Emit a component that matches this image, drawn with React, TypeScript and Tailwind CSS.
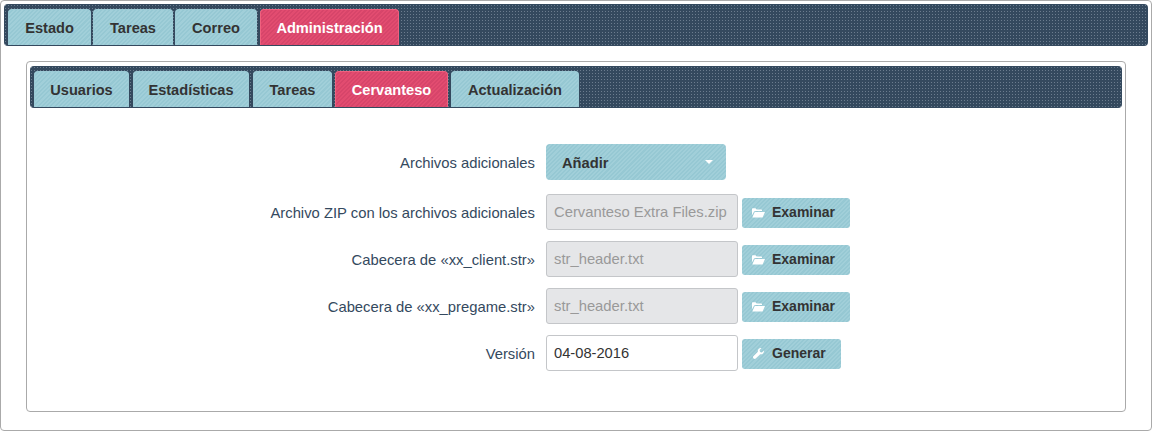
const barBg =
  "bg-[#34495e] bg-[radial-gradient(circle_at_1.5px_1.5px,#6b7c8e_0.8px,transparent_1px)] bg-[length:3px_3px]";
const tealBg =
  "bg-[#9ccbd6] bg-[repeating-linear-gradient(135deg,#a1cfd9_0px,#a1cfd9_1.5px,#96c8d3_1.5px,#96c8d3_3px)]";
const redBg =
  "bg-[#dd4468] bg-[repeating-linear-gradient(135deg,#e24c70_0px,#e24c70_1.5px,#d7456a_1.5px,#d7456a_3px)]";

function TabBar({ tabs, active, className }: { tabs: { label: string; width: string }[]; active: string; className: string }) {
  return (
    <div className={`flex h-[42px] items-end rounded-[4px] pb-[1px] pl-1 ${barBg} ${className}`}>
      {tabs.map((tab) => (
        <div
          key={tab.label}
          className={`flex h-[36px] items-center justify-center rounded-t-[4px] border border-b-0 pt-[2px] text-[14.6px] font-bold ${tab.width} ${
            tab.label === active
              ? `border-[#f0617f] text-white ${redBg}`
              : `border-[#9ccbd6] text-[#333333] ${tealBg}`
          }`}
        >
          {tab.label}
        </div>
      ))}
    </div>
  );
}

function FolderIcon() {
  return (
    <svg width="13" height="10" viewBox="0 0 13 10" fill="#fff" className="shrink-0">
      <path d="M0 1.2C0 .6.4.2 1 .2h2.6l1 1.2h4.6c.5 0 .8.3.8.8v.8H3.2c-.6 0-1 .3-1.3.8L0 7.2z" />
      <path d="M3.2 3.9H13L10.8 9c-.2.4-.5.6-1 .6H.8c-.3 0-.5-.2-.3-.5l2-4.6c.1-.4.4-.6.7-.6z" />
    </svg>
  );
}

function WrenchIcon() {
  return (
    <svg width="11" height="11" viewBox="0 0 12 12" fill="#fff" className="mx-[1px] shrink-0">
      <path d="M11.8 2.7c.3 1.2 0 2.4-.9 3.2-.8.8-1.9 1.1-3 .8L3 11.5c-.6.6-1.6.6-2.2 0l-.4-.4c-.6-.6-.6-1.5 0-2.1l4.9-4.8c-.3-1.1 0-2.3.8-3.1C7 .2 8.2-.1 9.3.2L7.2 2.3l.5 2 2 .5z" />
    </svg>
  );
}

function ActionButton({ label, width, icon }: { label: string; width: string; icon: React.ReactNode }) {
  return (
    <button className={`mt-[1px] flex h-[30px] items-center gap-[7px] rounded-[3px] pl-[10px] text-[14px] font-bold text-[#333333] ${width} ${tealBg}`}>
      {icon}
      <span>{label}</span>
    </button>
  );
}

function Row({ label, className, children }: { label: string; className?: string; children: React.ReactNode }) {
  return (
    <div className={`flex h-[36px] items-center ${className ?? ""}`}>
      <label className="w-[535px] pt-[2px] text-right text-[14.8px] text-[#34495e]">{label}</label>
      <div className="ml-[11px] flex items-center gap-[4px]">{children}</div>
    </div>
  );
}

function FileRow({ label, file, className }: { label: string; file: string; className?: string }) {
  return (
    <Row label={label} className={className}>
      <div className="flex h-[36px] w-[192px] items-center rounded-[3px] border border-[#c4c6c9] bg-[#e5e6e8] pl-[7px] text-[14.8px] text-[#999999]">
        {file}
      </div>
      <ActionButton label="Examinar" width="w-[108px]" icon={<FolderIcon />} />
    </Row>
  );
}

export default function App() {
  return (
    <div className="h-[431px] w-[1152px] overflow-hidden rounded-[4px] border border-[#aaaaaa] bg-white px-[3px] pt-[3px] font-['Liberation_Sans',Arial,sans-serif]">
      <TabBar
        className="gap-[2px]"
        active="Administración"
        tabs={[
          { label: "Estado", width: "w-[83px]" },
          { label: "Tareas", width: "w-[80px]" },
          { label: "Correo", width: "w-[82px]" },
          { label: "Administración", width: "ml-[1px] w-[139px]" },
        ]}
      />
      <div className="mx-[22px] mt-[15px] h-[351px] rounded-[4px] border border-[#aaaaaa] px-[3px] pt-[4px]">
        <TabBar
          className="gap-[4px]"
          active="Cervanteso"
          tabs={[
            { label: "Usuarios", width: "w-[95px]" },
            { label: "Estadísticas", width: "w-[116px]" },
            { label: "Tareas", width: "w-[79px]" },
            { label: "Cervanteso", width: "ml-[-1px] w-[113px]" },
            { label: "Actualización", width: "ml-[-1px] w-[128px]" },
          ]}
        />
        <div className="-ml-[30px] mt-[36px]">
          <Row label="Archivos adicionales">
            <div className={`relative flex h-[36px] w-[180px] items-center rounded-[4px] pl-[16px] pt-[2px] text-[14.7px] font-bold text-[#333333] ${tealBg}`}>
              Añadir
              <span className="absolute right-[13px] top-[16px] h-0 w-0 border-x-[4px] border-t-[4px] border-x-transparent border-t-white" />
            </div>
          </Row>
          <FileRow className="mt-[14px]" label="Archivo ZIP con los archivos adicionales" file="Cervanteso Extra Files.zip" />
          <FileRow className="mt-[11px]" label="Cabecera de «xx_client.str»" file="str_header.txt" />
          <FileRow className="mt-[11px]" label="Cabecera de «xx_pregame.str»" file="str_header.txt" />
          <Row className="mt-[11px]" label="Versión">
            <div className="flex h-[36px] w-[192px] items-center rounded-[3px] border border-[#c4c6c9] bg-white pl-[7px] text-[14.7px] text-[#333333]">
              04-08-2016
            </div>
            <ActionButton label="Generar" width="w-[99px]" icon={<WrenchIcon />} />
          </Row>
        </div>
      </div>
    </div>
  );
}
